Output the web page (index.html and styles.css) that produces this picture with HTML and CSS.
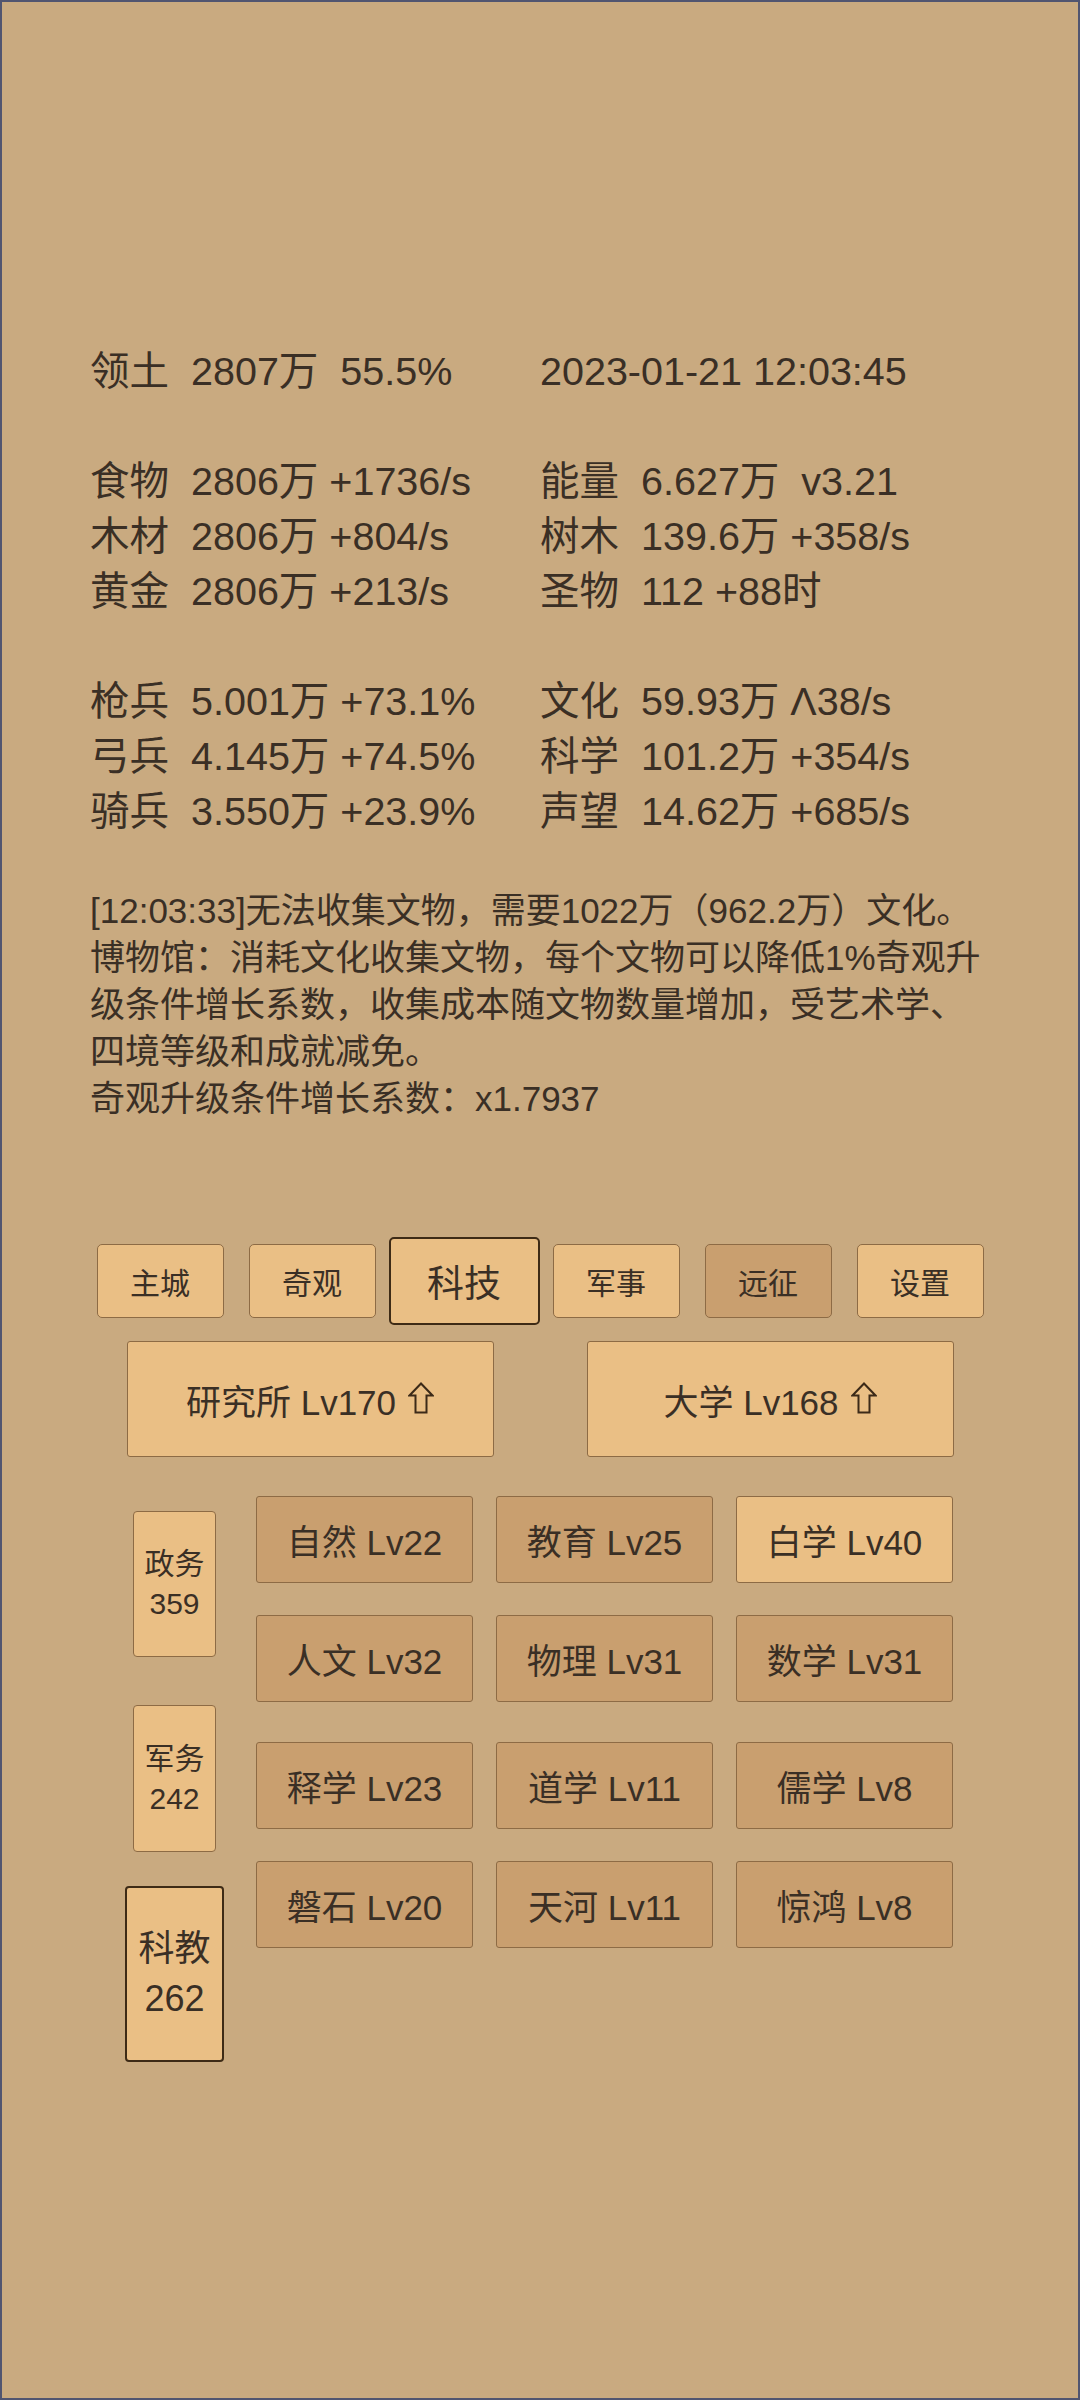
FILE: index.html
```html
<!DOCTYPE html>
<html lang="zh">
<head>
<meta charset="utf-8">
<title>科技</title>
<link rel="stylesheet" href="styles.css">
</head>
<body>
<div class="page">
  <div class="stats">
    <div class="cell"><span class="k">领土</span><span class="v">2807万  55.5%</span></div>
    <div class="cell"><span class="v">2023-01-21 12:03:45</span></div>
    <div class="blank"></div>
    <div class="cell"><span class="k">食物</span><span class="v">2806万 +1736/s</span></div>
    <div class="cell"><span class="k">能量</span><span class="v">6.627万  v3.21</span></div>
    <div class="cell"><span class="k">木材</span><span class="v">2806万 +804/s</span></div>
    <div class="cell"><span class="k">树木</span><span class="v">139.6万 +358/s</span></div>
    <div class="cell"><span class="k">黄金</span><span class="v">2806万 +213/s</span></div>
    <div class="cell"><span class="k">圣物</span><span class="v">112 +88时</span></div>
    <div class="blank"></div>
    <div class="cell"><span class="k">枪兵</span><span class="v">5.001万 +73.1%</span></div>
    <div class="cell"><span class="k">文化</span><span class="v">59.93万 Λ38/s</span></div>
    <div class="cell"><span class="k">弓兵</span><span class="v">4.145万 +74.5%</span></div>
    <div class="cell"><span class="k">科学</span><span class="v">101.2万 +354/s</span></div>
    <div class="cell"><span class="k">骑兵</span><span class="v">3.550万 +23.9%</span></div>
    <div class="cell"><span class="k">声望</span><span class="v">14.62万 +685/s</span></div>
  </div>

  <div class="msg">
    <p>[12:03:33]无法收集文物，需要1022万（962.2万）文化。</p>
    <p>博物馆：消耗文化收集文物，每个文物可以降低1%奇观升级条件增长系数，收集成本随文物数量增加，受艺术学、四境等级和成就减免。</p>
    <p>奇观升级条件增长系数：x1.7937</p>
  </div>

  <div class="tabs">
    <div class="tab">主城</div>
    <div class="tab">奇观</div>
    <div class="tab active">科技</div>
    <div class="tab">军事</div>
    <div class="tab dark">远征</div>
    <div class="tab">设置</div>
  </div>

  <div class="buildings">
    <div class="bld">研究所 Lv170<svg class="arrow" viewBox="0 0 26 32" width="26" height="32"><polygon points="13,1.5 24.5,13.5 18.5,13.5 18.5,30.5 7.5,30.5 7.5,13.5 1.5,13.5"/></svg></div>
    <div class="bld">大学 Lv168<svg class="arrow" viewBox="0 0 26 32" width="26" height="32"><polygon points="13,1.5 24.5,13.5 18.5,13.5 18.5,30.5 7.5,30.5 7.5,13.5 1.5,13.5"/></svg></div>
  </div>

  <div class="lower">
    <div class="side">
      <div class="sbtn s1"><span>政务</span><span>359</span></div>
      <div class="sbtn s2"><span>军务</span><span>242</span></div>
      <div class="sbtn active s3"><span>科教</span><span>262</span></div>
    </div>
    <div class="grids">
      <div class="grid">
        <div class="gbtn">自然 Lv22</div>
        <div class="gbtn">教育 Lv25</div>
        <div class="gbtn light">白学 Lv40</div>
        <div class="gbtn">人文 Lv32</div>
        <div class="gbtn">物理 Lv31</div>
        <div class="gbtn">数学 Lv31</div>
      </div>
      <div class="grid">
        <div class="gbtn">释学 Lv23</div>
        <div class="gbtn">道学 Lv11</div>
        <div class="gbtn">儒学 Lv8</div>
        <div class="gbtn">磐石 Lv20</div>
        <div class="gbtn">天河 Lv11</div>
        <div class="gbtn">惊鸿 Lv8</div>
      </div>
    </div>
  </div>
</div>
</body>
</html>
```

FILE: styles.css
```css
html, body {
  margin: 0;
  padding: 0;
}

body {
  font-family: "Liberation Sans", "Noto Sans CJK SC", sans-serif;
  color: #3a2f25;
}

.page {
  box-sizing: border-box;
  width: 1080px;
  height: 2400px;
  border: 2px solid #515570;
  background: #c9aa80;
  padding-top: 342px;
  overflow: hidden;
}

.stats {
  display: grid;
  grid-template-columns: 450px 1fr;
  margin-left: 88px;
  font-size: 39.5px;
  line-height: 55px;
}

.blank {
  grid-column: 1 / 3;
  height: 55px;
}

.cell {
  white-space: nowrap;
}

.k {
  display: inline-block;
  width: 101px;
}

.v {
  white-space: pre;
}

.msg {
  margin: 48px 0 0 88px;
  width: 900px;
  font-size: 35px;
  line-height: 47px;
}

.msg p {
  margin: 0;
}

.tabs {
  display: flex;
  justify-content: center;
  align-items: center;
  height: 88px;
  margin-top: 115px;
}

.tab {
  box-sizing: border-box;
  width: 127px;
  height: 74px;
  margin: 0 12.5px;
  display: flex;
  align-items: center;
  justify-content: center;
  background: #eabf85;
  border: 1.5px solid #8d6b45;
  border-radius: 5px;
  font-family: "Noto Sans CJK SC", sans-serif;
  font-size: 30px;
}

.tab.dark {
  background: #c99f6f;
}

.tab.active {
  width: 151px;
  height: 88px;
  margin: 0 0.5px;
  border: 2px solid #3e2b16;
  font-size: 37px;
}

.buildings {
  display: flex;
  justify-content: center;
  gap: 93px;
  margin-top: 16px;
}

.bld {
  box-sizing: border-box;
  width: 367px;
  height: 116px;
  display: flex;
  align-items: center;
  justify-content: center;
  background: #eabf85;
  border: 1.5px solid #8d6b45;
  border-radius: 3px;
  font-size: 35px;
}

.arrow {
  margin-left: 12px;
  margin-top: -2px;
  fill: none;
  stroke: #3c2a18;
  stroke-width: 2;
  stroke-linejoin: miter;
}

.lower {
  display: flex;
  margin-top: 39px;
  margin-left: 123px;
  gap: 32px;
}

.side {
  width: 99px;
  display: flex;
  flex-direction: column;
  align-items: center;
}

.sbtn {
  box-sizing: border-box;
  width: 83px;
  height: 146px;
  display: flex;
  flex-direction: column;
  align-items: center;
  justify-content: center;
  background: #eabf85;
  border: 1.5px solid #8d6b45;
  border-radius: 4px;
  font-size: 30px;
  line-height: 40px;
}

.s1 { margin-top: 15px; }
.s2 { margin-top: 48px; height: 147px; }
.s3 { margin-top: 34px; }

.sbtn.active {
  width: 99px;
  height: 176px;
  border: 2px solid #3e2b16;
  font-size: 36px;
  line-height: 50px;
}

.grids {
  display: flex;
  flex-direction: column;
  gap: 40px;
}

.grid {
  display: grid;
  grid-template-columns: repeat(3, 217px);
  grid-auto-rows: 87px;
  column-gap: 23px;
  row-gap: 32px;
}

.gbtn {
  box-sizing: border-box;
  display: flex;
  align-items: center;
  justify-content: center;
  background: #c99f6f;
  border: 1.5px solid #8d6b45;
  border-radius: 3px;
  font-size: 35px;
}

.gbtn.light {
  background: #eabf85;
}
```
